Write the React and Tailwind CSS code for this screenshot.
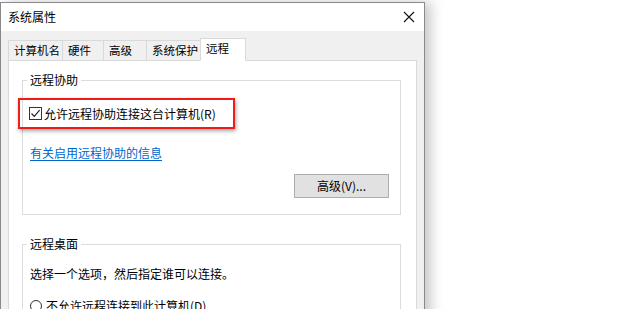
import React from 'react';

const font = { fontFamily: '"Noto Sans CJK SC", "Microsoft YaHei", sans-serif' };

const tabs = ['计算机名', '硬件', '高级', '系统保护', '远程'];
const tabWidths = ['w-[55px]', 'w-[42px]', 'w-[44px]', 'w-[55px]', 'w-[46px]'];

const GroupBox = ({ title, className, children }) => (
  <div className={`relative border border-[#dcdcdc] ${className}`}>
    <span className="absolute -top-[10px] left-[4px] bg-white px-[3px] text-[12px] leading-[18px]">{title}</span>
    {children}
  </div>
);

export default function App() {
  return (
    <div className="w-[620px] h-[309px] overflow-hidden bg-white pt-[2px] text-black" style={font}>
      <div className="w-[425px] h-[330px] border border-[#8a8a8a] shadow-[6px_0_12px_rgba(0,0,0,0.22)] flex flex-col">
        {/* title bar */}
        <div className="h-[28px] shrink-0 bg-white flex items-center justify-between pl-[7px] pr-[8px]">
          <span className="text-[12px]">系统属性</span>
          <svg width="12" height="12" viewBox="0 0 12 12" className="mr-[1px]">
            <path d="M1 1L11 11M11 1L1 11" stroke="#111" strokeWidth="1.1" fill="none" />
          </svg>
        </div>

        {/* body */}
        <div className="flex-1 bg-[#f0f0f0] px-[7px] pt-[7px]">
          {/* tabs */}
          <div className="flex items-end h-[22px] relative z-10">
            {tabs.map((t, i) => {
              const sel = i === 4;
              return (
                <div
                  key={t}
                  className={`${tabWidths[i]} shrink-0 whitespace-nowrap overflow-hidden text-[11.5px] flex items-start pl-[5px] border border-[#d9d9d9] ${
                    i > 0 ? '-ml-px' : ''
                  } ${sel ? 'h-[23px] bg-white border-b-white pt-[1px] -mb-px' : 'h-[20px] bg-[#f0f0f0] border-b-0 pt-[1px]'}`}
                >
                  <span className="leading-[17px]">{t}</span>
                </div>
              );
            })}
          </div>

          {/* panel */}
          <div className="w-[409px] h-[260px] bg-white border border-[#d9d9d9] pl-[13px] pr-[15px] pt-[19px]">
            <GroupBox title="远程协助" className="h-[135px]">
              <div className="ml-[-5px] mt-[17px] w-[217px] h-[31px] border-2 border-[#f01c1c] shadow-[1px_2px_4px_rgba(0,0,0,0.35)] flex items-center pl-[9px]">
                <span className="w-[13px] h-[13px] border border-[#333] flex items-center justify-center bg-white">
                  <svg width="11" height="11" viewBox="0 0 11 11">
                    <path d="M1.5 5.5L4.3 8.3L9.6 2.2" stroke="#222" strokeWidth="1.2" fill="none" />
                  </svg>
                </span>
                <span className="ml-[2px] text-[12px] leading-none">允许远程协助连接这台计算机(R)</span>
              </div>
              <div className="ml-[7px] mt-[16px] text-[12px] text-[#0066cc] underline underline-offset-2 leading-[16px]">
                有关启用远程协助的信息
              </div>
              <div className="flex justify-end pr-[11px] mt-[13px]">
                <div className="w-[95px] h-[24px] bg-[#e1e1e1] border border-[#adadad] flex items-center justify-center text-[12px]">
                  高级(V)...
                </div>
              </div>
            </GroupBox>

            <GroupBox title="远程桌面" className="mt-[29px] h-[90px]">
              <div className="ml-[7px] mt-[21px] text-[12px] leading-[16px]">选择一个选项，然后指定谁可以连接。</div>
              <div className="ml-[7px] mt-[16px] flex items-center text-[12px] leading-[16px]">
                <span className="w-[12px] h-[12px] rounded-full border border-[#333] bg-white" />
                <span className="ml-[4px]">不允许远程连接到此计算机(D)</span>
              </div>
            </GroupBox>
          </div>
        </div>
      </div>
    </div>
  );
}
